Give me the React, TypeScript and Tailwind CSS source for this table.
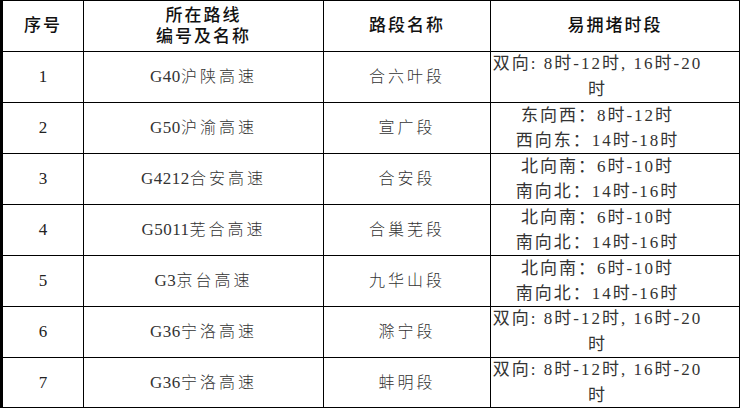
type Row = {
  no: string;
  code: string;
  route: string;
  name: string;
  times: string[];
  tight?: boolean;
};

const rows: Row[] = [
  { no: "1", code: "G40", route: "沪陕高速", name: "合六叶段", times: ["双向: 8时-12时, 16时-20", "时"], tight: true },
  { no: "2", code: "G50", route: "沪渝高速", name: "宣广段", times: ["东向西：8时-12时", "西向东：14时-18时"] },
  { no: "3", code: "G4212", route: "合安高速", name: "合安段", times: ["北向南：6时-10时", "南向北：14时-16时"] },
  { no: "4", code: "G5011", route: "芜合高速", name: "合巢芜段", times: ["北向南：6时-10时", "南向北：14时-16时"] },
  { no: "5", code: "G3", route: "京台高速", name: "九华山段", times: ["北向南：6时-10时", "南向北：14时-16时"] },
  { no: "6", code: "G36", route: "宁洛高速", name: "滁宁段", times: ["双向: 8时-12时, 16时-20", "时"], tight: true },
  { no: "7", code: "G36", route: "宁洛高速", name: "蚌明段", times: ["双向: 8时-12时, 16时-20", "时"], tight: true },
];

const cell = "flex items-center justify-center border-r border-b border-black text-center";
const font = { fontFamily: '"Liberation Serif", "Noto Sans CJK SC", serif' };

export default function App() {
  return (
    <div className="w-[741px] h-[410px] bg-white overflow-hidden">
      <div
        className="grid grid-cols-[81px_240px_167px_249px] border-l-[3px] border-t border-black w-[740px]"
        style={font}
      >
        <div className={`${cell} h-[51px] text-[17px] font-medium tracking-[2px] text-[#111]`}>序号</div>
        <div className={`${cell} h-[51px] text-[17px] font-medium tracking-[2px] leading-[21px] text-[#111]`}>
          所在路线
          <br />
          编号及名称
        </div>
        <div className={`${cell} h-[51px] text-[17px] font-medium tracking-[2px] text-[#111]`}>路段名称</div>
        <div className={`${cell} h-[51px] text-[17px] font-medium tracking-[2px] text-[#111]`}>易拥堵时段</div>

        {rows.map((r, i) => {
          const h = i === rows.length - 1 ? "h-[50px]" : "h-[51px]";
          return (
            <div key={r.no} className="contents">
              <div className={`${cell} ${h} text-[17px] text-[#222]`}>{r.no}</div>
              <div className={`${cell} ${h} text-[16px] text-[#333]`}>
                <span className="text-[17px] tracking-[0.5px]">{r.code}</span>
                <span className="tracking-[3px] font-light">{r.route}</span>
              </div>
              <div className={`${cell} ${h} text-[16px] tracking-[3px] font-light text-[#333]`}>{r.name}</div>
              <div className={`${cell} ${h} flex-col pl-[2px] pr-[37px] text-[17px] tracking-[2px] text-[#333] ${r.tight ? "leading-[26px]" : "leading-[25px]"}`}>
                {r.times.map((t) => (
                  <div key={t} className="whitespace-nowrap">{t}</div>
                ))}
              </div>
            </div>
          );
        })}
      </div>
    </div>
  );
}
